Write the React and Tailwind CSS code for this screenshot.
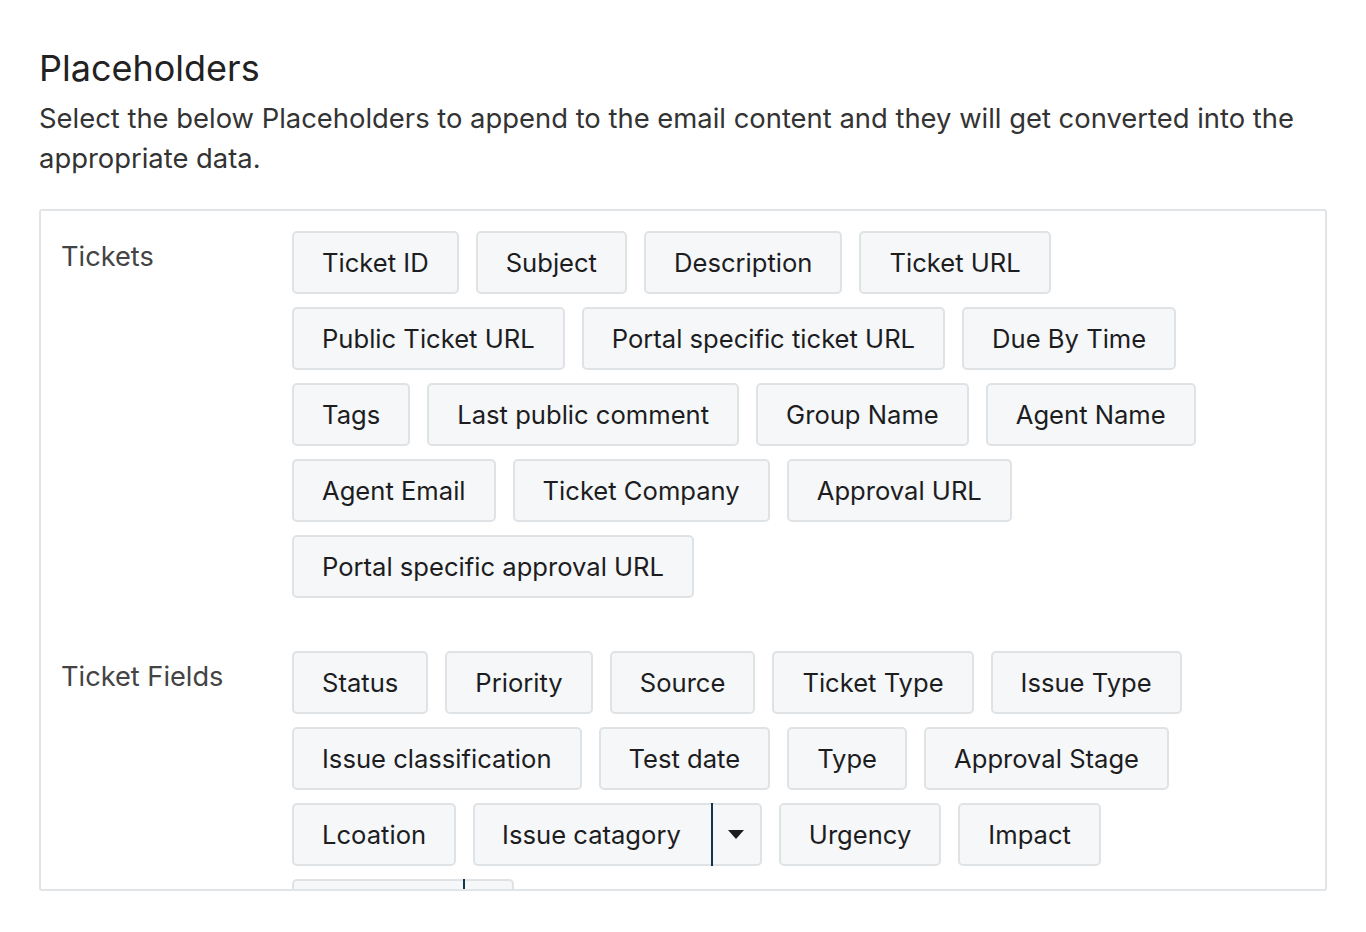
import { useState } from 'react'

const SECTIONS = [
  {
    title: 'Tickets',
    items: [
      'Ticket ID', 'Subject', 'Description', 'Ticket URL',
      'Public Ticket URL', 'Portal specific ticket URL', 'Due By Time',
      'Tags', 'Last public comment', 'Group Name', 'Agent Name',
      'Agent Email', 'Ticket Company', 'Approval URL',
      'Portal specific approval URL',
    ],
  },
  {
    title: 'Ticket Fields',
    items: [
      'Status', 'Priority', 'Source', 'Ticket Type', 'Issue Type',
      'Issue classification', 'Test date', 'Type', 'Approval Stage',
      'Lcoation', { label: 'Issue catagory', split: true }, 'Urgency', 'Impact',
      { label: 'Category', split: true },
    ],
  },
]

function Caret() {
  return (
    <svg width="16" height="9" viewBox="0 0 16 9">
      <path d="M0 0 H16 L8 9 Z" fill="#1d1d1f" />
    </svg>
  )
}

function Chip({ item, onPick }) {
  const label = typeof item === 'string' ? item : item.label
  const base = 'h-[63px] border-2 border-[#dfe3e6] bg-[#f5f7f9] text-[25.6px] leading-[31px] text-[#1d1d1f] whitespace-nowrap'
  if (typeof item !== 'string' && item.split) {
    return (
      <div className="flex">
        <button onClick={() => onPick(label)} className={`${base} rounded-l-[5px] border-r-0 pl-[27px] pr-[30px]`}>
          {label}
        </button>
        <div className="w-[2px] h-[63px] bg-[#12344d]" />
        <button className={`${base} rounded-r-[5px] border-l-0 w-[49px] flex items-center justify-center`}>
          <Caret />
        </button>
      </div>
    )
  }
  return (
    <button onClick={() => onPick(label)} className={`${base} rounded-[5px] px-[28px]`}>
      {label}
    </button>
  )
}

export default function App() {
  const [picked, setPicked] = useState([])

  return (
    <div className="px-[39px] pt-[46px] bg-white min-h-[932px]" style={{ fontFamily: 'Inter, "Noto Sans", sans-serif' }}>
      <h2 className="text-[36px] leading-[44px] text-[#222]">Placeholders</h2>
      <p className="mt-[8px] text-[27.4px] leading-[40px] text-[#333]">
        Select the below Placeholders to append to the email content and they will get converted into the appropriate data.
      </p>

      <div className="mt-[31px] h-[682px] overflow-hidden border-2 border-[#e2e5e8] rounded-[3px] pt-[20px] pl-[20px] pr-[20px]">
        {SECTIONS.map(s => (
          <div key={s.title} className="flex mb-[53px]">
            <div className="w-[231px] shrink-0 pt-[8px] text-[27.2px] leading-[36px] text-[#444]">{s.title}</div>
            <div className="flex flex-wrap gap-x-[17px] gap-y-[13px]">
              {s.items.map(it => (
                <Chip key={typeof it === 'string' ? it : it.label} item={it} onPick={l => setPicked([...picked, l])} />
              ))}
            </div>
          </div>
        ))}
      </div>
    </div>
  )
}
